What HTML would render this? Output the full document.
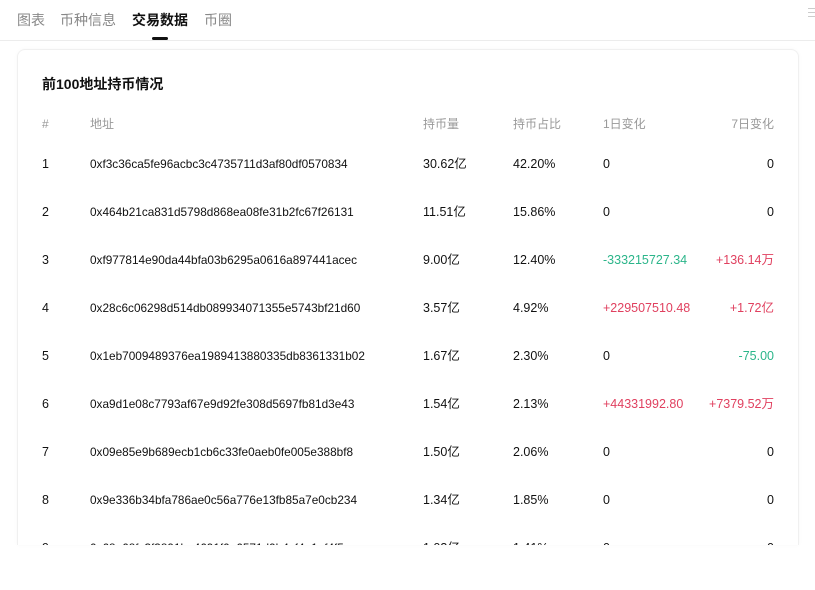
<!DOCTYPE html>
<html><head><meta charset="utf-8"><style>
*{margin:0;padding:0;box-sizing:border-box}
body{width:815px;height:590px;background:#fff;font-family:"Liberation Sans","Noto Sans CJK SC",sans-serif;position:relative;overflow:hidden;color:#111}
.tab{position:absolute;top:10px;font-size:14px;color:#888}
.tab.on{color:#111;font-weight:bold}
.ul{position:absolute;left:152px;top:37px;width:16px;height:3px;background:#111;border-radius:2px}
.hr{position:absolute;left:0;top:40px;width:815px;height:1px;background:#ececec}
.menu{position:absolute;left:808px;top:8px;width:7px}
.menu i{display:block;height:1px;background:#ccc;margin-bottom:3px}
.card{position:absolute;left:17px;top:49px;width:782px;height:496px;border:1px solid #f0f0f0;border-bottom:none;border-radius:8px 8px 0 0;overflow:hidden;box-shadow:0 0 4px rgba(0,0,0,.03)}
.title{position:absolute;left:24px;top:24px;font-size:14px;font-weight:bold}
.r{position:absolute;left:0;width:782px;font-size:12.5px;height:16px;line-height:16px}
.r span{position:absolute;white-space:nowrap}
.h{color:#999;font-size:12px}
.c0{left:24px}.c1{left:72px;font-size:11.8px}.c2{left:405px}.c3{left:495px}.c4{left:585px}.c5{right:26px}
.g{color:#2bb58a}.d{color:#e0405f}
</style></head><body>
<div class="tab" style="left:17px">图表</div>
<div class="tab" style="left:60px">币种信息</div>
<div class="tab on" style="left:132px">交易数据</div>
<div class="tab" style="left:204px">币圈</div>
<div class="ul"></div>
<div class="hr"></div>
<div class="menu"><i></i><i></i><i></i></div>
<div class="card">
<div class="title">前100地址持币情况</div>
<div class="r h" style="top:66px"><span class="c0">#</span><span class="c1" style="font-size:12px">地址</span><span class="c2">持币量</span><span class="c3">持币占比</span><span class="c4">1日变化</span><span class="c5">7日变化</span></div>
<div class="r" style="top:106px"><span class="c0">1</span><span class="c1">0xf3c36ca5fe96acbc3c4735711d3af80df0570834</span><span class="c2">30.62亿</span><span class="c3">42.20%</span><span class="c4">0</span><span class="c5">0</span></div>
<div class="r" style="top:154px"><span class="c0">2</span><span class="c1">0x464b21ca831d5798d868ea08fe31b2fc67f26131</span><span class="c2">11.51亿</span><span class="c3">15.86%</span><span class="c4">0</span><span class="c5">0</span></div>
<div class="r" style="top:202px"><span class="c0">3</span><span class="c1">0xf977814e90da44bfa03b6295a0616a897441acec</span><span class="c2">9.00亿</span><span class="c3">12.40%</span><span class="c4 g">-333215727.34</span><span class="c5 d">+136.14万</span></div>
<div class="r" style="top:250px"><span class="c0">4</span><span class="c1">0x28c6c06298d514db089934071355e5743bf21d60</span><span class="c2">3.57亿</span><span class="c3">4.92%</span><span class="c4 d">+229507510.48</span><span class="c5 d">+1.72亿</span></div>
<div class="r" style="top:298px"><span class="c0">5</span><span class="c1">0x1eb7009489376ea1989413880335db8361331b02</span><span class="c2">1.67亿</span><span class="c3">2.30%</span><span class="c4">0</span><span class="c5 g">-75.00</span></div>
<div class="r" style="top:346px"><span class="c0">6</span><span class="c1">0xa9d1e08c7793af67e9d92fe308d5697fb81d3e43</span><span class="c2">1.54亿</span><span class="c3">2.13%</span><span class="c4 d">+44331992.80</span><span class="c5 d">+7379.52万</span></div>
<div class="r" style="top:394px"><span class="c0">7</span><span class="c1">0x09e85e9b689ecb1cb6c33fe0aeb0fe005e388bf8</span><span class="c2">1.50亿</span><span class="c3">2.06%</span><span class="c4">0</span><span class="c5">0</span></div>
<div class="r" style="top:442px"><span class="c0">8</span><span class="c1">0x9e336b34bfa786ae0c56a776e13fb85a7e0cb234</span><span class="c2">1.34亿</span><span class="c3">1.85%</span><span class="c4">0</span><span class="c5">0</span></div>
<div class="r" style="top:490px"><span class="c0">9</span><span class="c1">0x68e68fc3f3891ba4691f0a6571d9b4cf4e1ef4f5</span><span class="c2">1.03亿</span><span class="c3">1.41%</span><span class="c4">0</span><span class="c5">0</span></div>
</div>
</body></html>
